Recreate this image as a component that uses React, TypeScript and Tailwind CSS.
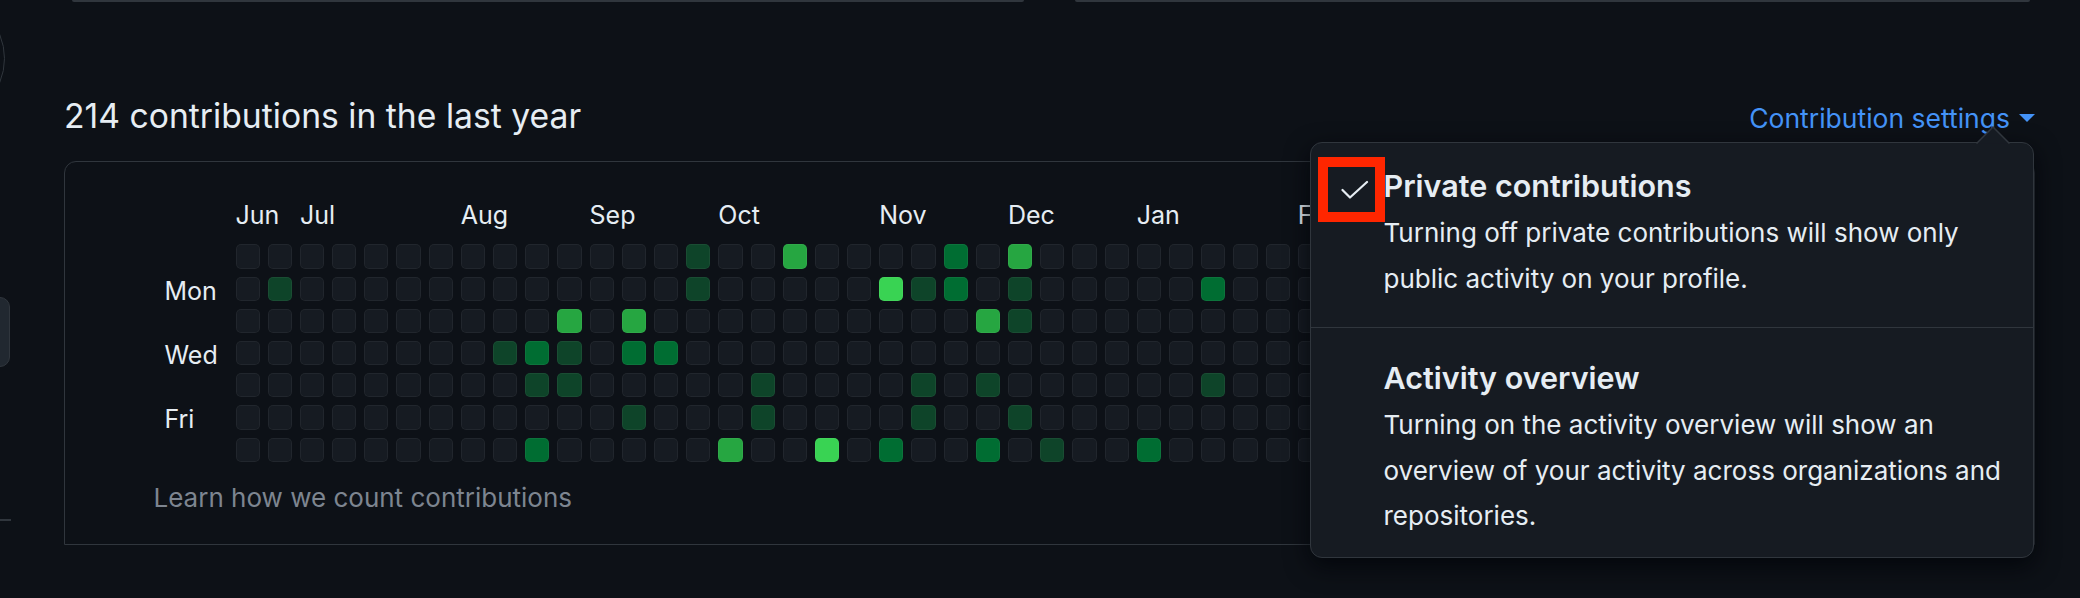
import React from 'react';

// contribution levels keyed by "row-col" (row 0 = Sunday)
const lit: Record<string, number> = {
  '0-14': 1, '0-17': 3, '0-22': 2, '0-24': 3, '0-38': 2, '0-44': 1,
  '1-1': 1, '1-14': 1, '1-20': 4, '1-21': 1, '1-22': 2, '1-24': 1, '1-30': 2, '1-36': 1,
  '2-10': 3, '2-12': 3, '2-23': 3, '2-24': 1, '2-40': 2,
  '3-8': 1, '3-9': 2, '3-10': 1, '3-12': 2, '3-13': 2, '3-42': 1,
  '4-9': 1, '4-10': 1, '4-16': 1, '4-21': 1, '4-23': 1, '4-30': 1, '4-47': 3,
  '5-12': 1, '5-16': 1, '5-21': 1, '5-24': 1, '5-35': 1,
  '6-9': 2, '6-15': 3, '6-18': 4, '6-20': 2, '6-23': 2, '6-25': 1, '6-28': 2, '6-39': 2,
};

const levelClass = [
  'bg-[#161b22]',
  'bg-[#0e4429]',
  'bg-[#006d32]',
  'bg-[#26a641]',
  'bg-[#39d353]',
];

// only the months that show; the rest sit under the menu
const months: Record<number, string> = {
  0: 'Jun', 2: 'Jul', 7: 'Aug', 11: 'Sep', 15: 'Oct', 20: 'Nov', 24: 'Dec',
  28: 'Jan', 33: 'Feb',
};

const days = ['', 'Mon', '', 'Wed', '', 'Fri', ''];
const cols = Array.from({ length: 53 }, (_, i) => i);

const CheckIcon = () => (
  <svg width="28" height="20" viewBox="0 0 28 20" fill="none">
    <polyline points="1.5,10 9,17.5 26,2" stroke="#e6edf3" strokeWidth="2.2" strokeLinecap="round" strokeLinejoin="round" />
  </svg>
);

export default function App() {
  return (
    <div className="relative flex w-[2080px] h-[598px] overflow-hidden bg-[#0d1117] text-[#e6edf3] font-['Inter',sans-serif]">
      {/* left column, mostly out of frame */}
      <div className="flex flex-col w-[11px] shrink-0 overflow-hidden">
        <div className="shrink-0 -ml-[120px] -mt-[4px] w-[125px] h-[125px] rounded-full border-[1.5px] border-[#30363d]" />
        <div className="shrink-0 -ml-[30px] mt-[176px] w-[40px] h-[70px] rounded-[10px] bg-[#212830] border-[1.5px] border-[#30363d]" />
        <div className="shrink-0 mt-[152px] w-[11px] h-[1.5px] bg-[#30363d]" />
      </div>

      <div className="flex flex-col flex-1 pl-[53px] pr-[45px]">
        {/* bottoms of the cards above */}
        <div className="flex ml-[8px] h-[2px]">
          <div className="w-[952px] h-[1.5px] bg-[#30363d] rounded-b-full" />
          <div className="ml-[51px] w-[955px] h-[1.5px] bg-[#30363d] rounded-b-full" />
        </div>

        <div className="flex items-baseline justify-between mt-[93.6px]">
          <h2 className="text-[33.7px] leading-[40px] font-normal">214 contributions in the last year</h2>
          <div className="inline-flex items-center text-[26.5px] leading-[34px] text-[#4493f8]">
            <span>Contribution settings</span>
            <svg className="ml-[9px]" width="16" height="8" viewBox="0 0 16 8">
              <path d="M0 0 L16 0 L8 8 Z" fill="#4493f8" />
            </svg>
          </div>
        </div>

        {/* contribution graph */}
        <div className="mt-[25.4px] border-[1.5px] border-[#30363d] rounded-t-[12px] pt-[38.5px] pl-[88.5px] pb-[31px]">
          <div className="flex gap-[8px] ml-[82px] text-[25px] leading-[30px]">
            {cols.map((c) => (
              <div key={c} className="w-[24.2px] shrink-0 whitespace-nowrap">
                {months[c] ?? ''}
              </div>
            ))}
          </div>

          <div className="flex mt-[14px] ml-[11px]">
            <div className="flex flex-col gap-[8px] w-[71px] shrink-0 text-[25px] leading-[28px]">
              {days.map((d, i) => (
                <div key={i} className="h-[24.2px]">{d}</div>
              ))}
            </div>
            <div className="flex gap-[8px]">
              {cols.map((c) => (
                <div key={c} className="flex flex-col gap-[8px]">
                  {days.map((_, r) => (
                    <div
                      key={r}
                      className={`w-[24.2px] h-[24.2px] rounded-[5px] shadow-[inset_0_0_0_1px_rgba(255,255,255,0.05)] ${levelClass[lit[`${r}-${c}`] ?? 0]}`}
                    />
                  ))}
                </div>
              ))}
            </div>
          </div>

          <div className="mt-[21px] text-[26px] leading-[30px] text-[#7d8590]">
            Learn how we count contributions
          </div>
        </div>
      </div>

      {/* contribution settings menu */}
      <div className="absolute left-[1310px] top-[142px] w-[724px] rounded-[12px] border-[1.5px] border-[#30363d] bg-[#161b22] shadow-[0_8px_24px_rgba(1,4,9,0.8)]">
        <div className="flex pt-[21px] pl-[29.5px] pb-[26px]">
          <div className="w-[43px] shrink-0 pt-[15.5px]">
            <CheckIcon />
          </div>
          <div className="w-[640px]">
            <div className="text-[30.5px] leading-[44px] font-semibold">Private contributions</div>
            <div className="mt-[2px] text-[26px] leading-[45.5px]">
              Turning off private contributions will show only public activity on your profile.
            </div>
          </div>
        </div>
        <div className="border-t-[1.5px] border-[#30363d] pt-[28px] pl-[72.5px] pb-[18px]">
          <div className="w-[640px]">
            <div className="text-[30.5px] leading-[44px] font-semibold">Activity overview</div>
            <div className="mt-[2px] text-[26px] leading-[45.5px]">
              Turning on the activity overview will show an overview of your activity across organizations and repositories.
            </div>
          </div>
        </div>
      </div>

      {/* caret of the menu */}
      <svg className="absolute left-[1976px] top-[126px]" width="34" height="18" viewBox="0 0 34 18">
        <path d="M0.5 17.5 L17 1 L33.5 17.5 Z" fill="#161b22" />
        <path d="M0.5 17.5 L17 1 L33.5 17.5" fill="none" stroke="#30363d" strokeWidth="1.5" />
      </svg>

      {/* annotation box around the check mark */}
      <div className="absolute left-[1318px] top-[157px] w-[67px] h-[65px] border-[10px] border-[#ff2600]" />
    </div>
  );
}
